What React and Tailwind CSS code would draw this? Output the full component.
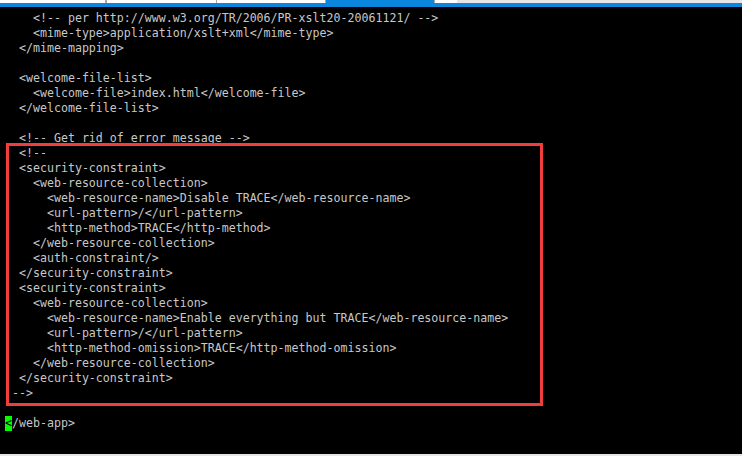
import React from "react";

const lines = [
  "    <!-- per http://www.w3.org/TR/2006/PR-xslt20-20061121/ -->",
  "    <mime-type>application/xslt+xml</mime-type>",
  "  </mime-mapping>",
  "",
  "  <welcome-file-list>",
  "    <welcome-file>index.html</welcome-file>",
  "  </welcome-file-list>",
  "",
  "  <!-- Get rid of error message -->",
  "  <!--",
  "  <security-constraint>",
  "    <web-resource-collection>",
  "      <web-resource-name>Disable TRACE</web-resource-name>",
  "      <url-pattern>/</url-pattern>",
  "      <http-method>TRACE</http-method>",
  "    </web-resource-collection>",
  "    <auth-constraint/>",
  "  </security-constraint>",
  "  <security-constraint>",
  "    <web-resource-collection>",
  "      <web-resource-name>Enable everything but TRACE</web-resource-name>",
  "      <url-pattern>/</url-pattern>",
  "      <http-method-omission>TRACE</http-method-omission>",
  "    </web-resource-collection>",
  "  </security-constraint>",
  " -->",
  "",
];

function App() {
  return (
    <div className="relative h-[456px] w-[742px] overflow-hidden bg-black flex flex-col">
      {/* tab strip */}
      <div className="flex h-[3px] shrink-0">
        <div className="w-[107px] bg-white border-r-2 border-[#a8a8a8]" />
        <div className="w-[110px] bg-white border-r border-[#a8a8a8]" />
        <div className="w-[109px] bg-white border-r border-[#a8a8a8]" />
        <div className="w-[108px] bg-[#0a86dc]" />
        <div className="w-[23px] bg-white border-l border-[#a8a8a8]" />
        <div className="flex-1 bg-[#e6e6e6]" />
      </div>
      <div className="h-[4px] shrink-0 bg-[#0a86dc]" />

      {/* terminal */}
      <div
        className="flex-1 pl-[5px] pt-[4px] text-[#c8c8c8] text-[11.62px] leading-[15px]"
        style={{ fontFamily: '"DejaVu Sans Mono", "Liberation Mono", monospace' }}
      >
        {lines.map((l, i) => (
          <div key={i} className="h-[15px] whitespace-pre">
            {l}
          </div>
        ))}
        <div className="h-[15px] whitespace-pre">
          <span className="inline-block h-[15px] bg-[#00ff00] text-black">&lt;</span>
          /web-app&gt;
        </div>
      </div>
      <div className="h-[2px] shrink-0 bg-[#e6e6e6]" />

      {/* annotation box */}
      <div className="absolute left-[6px] top-[143px] w-[537px] h-[263px] border-[3px] border-[#f23d3d]" />
    </div>
  );
}

export default App;
